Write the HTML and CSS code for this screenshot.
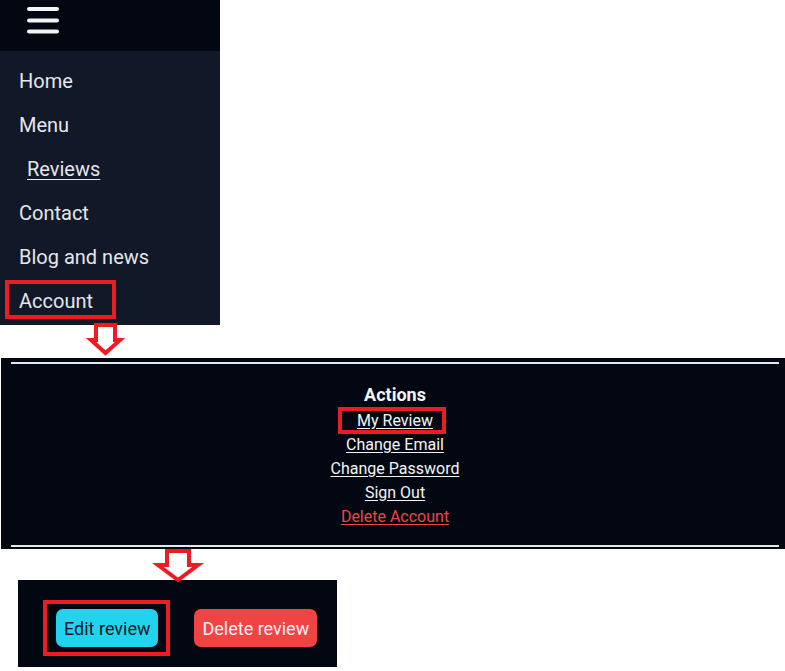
FILE: index.html
```html
<!DOCTYPE html>
<html lang="en">
<head>
<meta charset="utf-8">
<title>Account flow</title>
<link rel="stylesheet" href="styles.css">
</head>
<body>
<div class="page">
  <aside class="sidebar">
    <div class="topbar">
      <svg class="burger" width="32" height="28" viewBox="0 0 32 28">
        <g stroke="#f3f4f6" stroke-width="4" stroke-linecap="round">
          <line x1="2" y1="3" x2="30" y2="3"/>
          <line x1="2" y1="14.5" x2="30" y2="14.5"/>
          <line x1="2" y1="25.5" x2="30" y2="25.5"/>
        </g>
      </svg>
    </div>
    <nav class="menu">
      <div class="menu-item">Home</div>
      <div class="menu-item">Menu</div>
      <div class="menu-item sub"><span class="u">Reviews</span></div>
      <div class="menu-item">Contact</div>
      <div class="menu-item">Blog and news</div>
      <div class="menu-item mark-account">Account</div>
    </nav>
  </aside>

  <div class="arrow-row arrow-one">
    <svg width="34" height="34" viewBox="0 0 34 34" class="arrow">
      <path d="M6 2 H25 V17 H30 L15.5 30 L1 17 H6 Z" fill="#fff" stroke="#ed1c24" stroke-width="4"/>
    </svg>
  </div>

  <section class="actions-panel">
    <div class="rule"></div>
    <div class="actions">
      <div class="actions-title">Actions</div>
      <a class="link mark-review">My Review</a>
      <a class="link">Change Email</a>
      <a class="link">Change Password</a>
      <a class="link">Sign Out</a>
      <a class="link danger">Delete Account</a>
    </div>
    <div class="rule"></div>
  </section>

  <div class="arrow-row arrow-two">
    <svg width="42" height="31" viewBox="0 0 42 31" class="arrow">
      <path d="M9 2 H31 V16 H40 L20 31 L0 16 H9 Z" fill="#fff" stroke="#ed1c24" stroke-width="4"/>
    </svg>
  </div>

  <section class="review-panel">
    <button class="btn btn-edit mark-edit">Edit review</button>
    <button class="btn btn-delete">Delete review</button>
  </section>
</div>
</body>
</html>
```
FILE: styles.css
```css
*, *::before, *::after { box-sizing: border-box; }
html, body { margin: 0; padding: 0; background: #fff; }
body { font-family: Roboto, "Noto Sans", Arial, sans-serif; }

.page { width: 785px; }

.sidebar { width: 220px; }
.topbar {
  height: 51px;
  background: #030712;
  padding: 6px 0 0 27px;
}
.burger { display: block; }

.menu {
  background: #111827;
  padding: 8px 0 2px 0;
}
.menu-item {
  height: 44px;
  line-height: 44px;
  padding-left: 19px;
  font-size: 20px;
  color: #e5e7eb;
  position: relative;
}
.menu-item.sub { padding-left: 27px; }
.u { text-decoration: underline; text-underline-offset: 3px; text-decoration-thickness: 1px; }

.mark-account::after {
  content: "";
  position: absolute;
  left: 5px;
  top: 1px;
  width: 111px;
  height: 39px;
  border: 4px solid #ed1c24;
}

.arrow-row { display: flow-root; position: relative; z-index: 1; }
.arrow { display: block; overflow: visible; }
.arrow-one { height: 33px; padding-left: 90px; }
.arrow-one .arrow { margin-top: -2px; }
.arrow-two { height: 31px; padding-left: 158px; }

.actions-panel {
  margin-left: 1px;
  width: 784px;
  height: 191px;
  background: #030712;
  padding: 4px 6px 0 10px;
}
.rule { height: 2px; background: #e5e7eb; }
.actions {
  display: flex;
  flex-direction: column;
  align-items: center;
  padding: 17px 0 16px;
  color: #f3f4f6;
}
.actions-title {
  font-size: 18px;
  font-weight: 700;
  line-height: 28px;
}
.link {
  font-size: 16px;
  line-height: 24px;
  color: #f3f4f6;
  text-decoration: underline;
  text-underline-offset: 2px;
  position: relative;
}
.link.danger { color: #ef4444; }
.mark-review::after {
  content: "";
  position: absolute;
  left: -19px;
  right: -13px;
  top: -2px;
  bottom: -1px;
  border: 4px solid #ed1c24;
}

.review-panel {
  margin-left: 18px;
  width: 319px;
  height: 87px;
  background: #030712;
  padding: 29px 0 0 38px;
  display: flex;
  align-items: flex-start;
  gap: 36px;
}
.btn {
  font-family: Roboto, "Noto Sans", Arial, sans-serif;
  font-size: 18px;
  height: 38px;
  padding: 0 8px;
  border: none;
  border-radius: 7px;
  position: relative;
}
.btn-edit { background: #22d3ee; color: #111827; }
.btn-delete { background: #ef4444; color: #fef2f2; }
.mark-edit::after {
  content: "";
  position: absolute;
  left: -13px;
  right: -12px;
  top: -9px;
  bottom: -9px;
  border: 4px solid #ed1c24;
}
```
